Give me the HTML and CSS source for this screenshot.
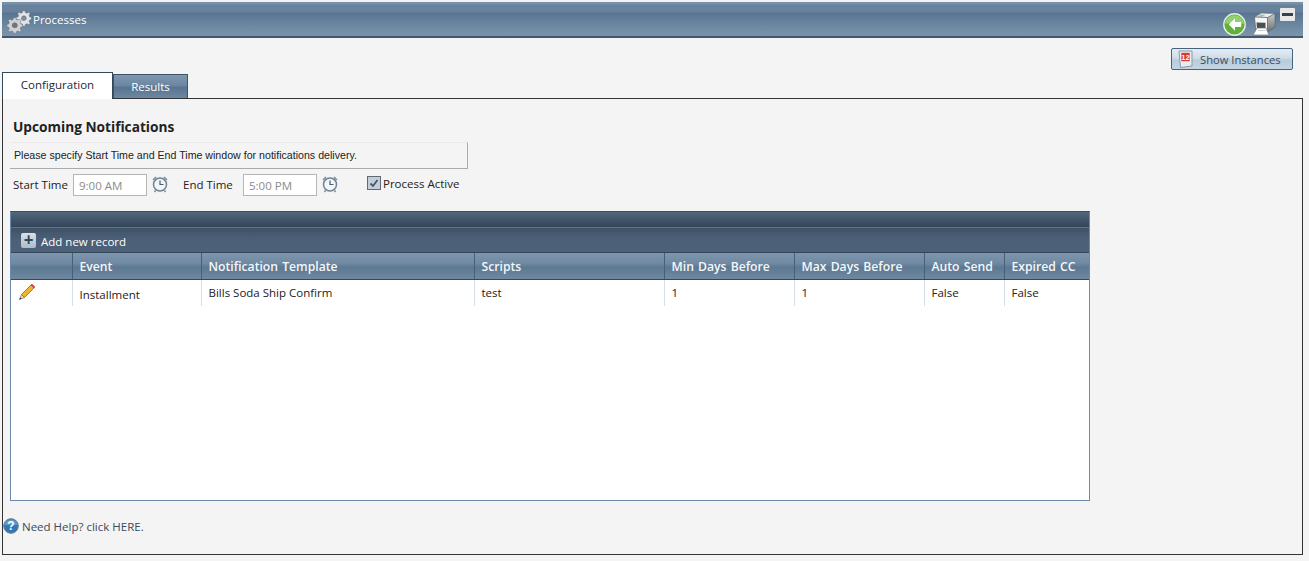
FILE: index.html
```html
<!DOCTYPE html>
<html lang="en">
<head>
<meta charset="utf-8">
<title>Processes</title>
<link rel="stylesheet" href="styles.css">
</head>
<body>
<header class="titlebar">
  <div class="title-left">
    <svg class="gears" viewBox="0 0 24 24" width="26" height="26">
      <g fill="#e2e5e8" stroke="#6a7078" stroke-width=".5">
        <path d="M15.5 1.500h2l.4 1.800 1.500.6 1.500-1 1.400 1.400-1 1.500.6 1.500 1.600.4v2l-1.600.4-.6 1.500 1 1.500-1.400 1.400-1.500-1-1.500.6-.4 1.800h-2l-.4-1.800-1.500-.6-1.500 1-1.400-1.400 1-1.500-.6-1.500-1.800-.4v-2l1.800-.4.6-1.500-1-1.500 1.400-1.400 1.500 1 1.500-.6z"/>
        <circle cx="16.500" cy="8.500" r="2.200" fill="#7d8fa2"/>
        <path d="M7 8h2.200l.4 1.700 1.500.6 1.500-1 1.500 1.500-1 1.500.6 1.500 1.700.4v2.200l-1.700.4-.6 1.500 1 1.500-1.500 1.500-1.500-1-1.500.6-.4 1.700H7l-.4-1.700-1.500-.6-1.500 1-1.500-1.500 1-1.500-.6-1.500-1.700-.4v-2.200l1.700-.4.6-1.500-1-1.500 1.500-1.500 1.500 1 1.500-.6z" fill="#ced2d6"/>
        <circle cx="8.100" cy="15" r="2.400" fill="#6e7780"/>
      </g>
    </svg>
    <span class="title-text">Processes</span>
  </div>
  <div class="title-icons">
    <svg class="back" viewBox="0 0 24 24" width="23" height="23">
      <circle cx="12" cy="12" r="11.200" fill="#5fb13a" stroke="#e6efe2" stroke-width="1.400"/>
      <path d="M1.800 11a10.300 10 0 0 1 20.400 0z" fill="#93d070"/>
      <path d="M12.500 5.500 6 12l6.500 6.500v-4H19v-5h-6.500z" fill="#fff"/>
    </svg>
    <svg class="printer" viewBox="0 0 24 24" width="24" height="24">
      <defs>
        <linearGradient id="printer-side" x1="0" y1="0" x2="0" y2="1">
          <stop offset="0" stop-color="#c8cbcd"/>
          <stop offset="1" stop-color="#6b6f72"/>
        </linearGradient>
      </defs>
      <path d="M15.500 5.500 23 1.500V15l-7.500 5z" fill="url(#printer-side)" stroke="#55595c" stroke-width=".6"/>
      <path d="M2.500 5 9.500 1 23 1.500l-7.500 4z" fill="#eceeee" stroke="#6a6e71" stroke-width=".6"/>
      <path d="M5.500 4.500 9 2.500l4.500.2-3.500 2z" fill="#9cc5ad"/>
      <path d="M2.500 5l13 .5V20H4z" fill="#f6f6f6" stroke="#5f6366" stroke-width=".7"/>
      <path d="M4.500 10.500l9 .2V17h-8.500z" fill="#4c4f52"/>
      <path d="M5 16h9l3 7H1z" fill="#fff" stroke="#6f7275" stroke-width=".7"/>
      <path d="M5.500 18.500h8" stroke="#c5c8ca" stroke-width=".8"/>
    </svg>
    <span class="minimize"><span class="minimize-bar"></span></span>
  </div>
</header>

<div class="toolbar">
  <button class="instances" type="button">
    <svg viewBox="0 0 16 18" width="16" height="18">
      <path d="M1 1h13v15l-11.500 1.500z" fill="#e6ebf0" stroke="#8c98a4"/>
      <rect x="3" y="2.500" width="9" height="9" fill="#d8382c" stroke="#f3f3f3" stroke-width=".6"/>
      <text x="7.500" y="10" class="cal-num">12</text>
    </svg>
    <span>Show Instances</span>
  </button>
</div>

<nav class="tabs">
  <div class="tab tab-active">Configuration</div>
  <div class="tab tab-plain">Results</div>
</nav>

<main class="panel">
  <h1 class="heading">Upcoming Notifications</h1>
  <p class="notice">Please specify Start Time and End Time window for notifications delivery.</p>
  <div class="timeform">
    <label class="field-label">Start Time</label>
    <span class="time-input">9:00 AM</span>
    <svg class="clock" viewBox="0 0 18 18" width="18" height="18">
      <path d="M2 5 5 2M16 5l-3-3M4.500 15.500 3.500 17M13.500 15.500l1 1.500" stroke="#7e8f9e" stroke-width="1.600" fill="none"/>
      <circle cx="9" cy="9.500" r="6.500" fill="#f3f6f8" stroke="#6f8394" stroke-width="1.500"/>
      <path d="M9 5.500v4h3.500" stroke="#4b5c6b" stroke-width="1.200" fill="none"/>
    </svg>
    <label class="field-label label-end">End Time</label>
    <span class="time-input">5:00 PM</span>
    <svg class="clock" viewBox="0 0 18 18" width="18" height="18">
      <path d="M2 5 5 2M16 5l-3-3M4.500 15.500 3.500 17M13.500 15.500l1 1.500" stroke="#7e8f9e" stroke-width="1.600" fill="none"/>
      <circle cx="9" cy="9.500" r="6.500" fill="#f3f6f8" stroke="#6f8394" stroke-width="1.500"/>
      <path d="M9 5.500v4h3.500" stroke="#4b5c6b" stroke-width="1.200" fill="none"/>
    </svg>
    <span class="check-wrap">
      <span class="checkbox">
        <svg viewBox="0 0 12 12" width="12" height="12"><rect width="12" height="12" fill="#c5ced8"/><path d="M2.500 6.500 5 9l4.500-6" stroke="#45566a" stroke-width="1.800" fill="none"/></svg>
      </span>
      <span class="check-label">Process Active</span>
    </span>
  </div>

  <section class="grid">
    <div class="grid-top"></div>
    <div class="grid-command">
      <span class="add-icon">+</span>
      <span class="add-label">Add new record</span>
    </div>
    <table class="grid-table">
      <colgroup>
        <col class="c1"><col class="c2"><col class="c3"><col class="c4"><col class="c5"><col class="c6"><col class="c7"><col class="c8">
      </colgroup>
      <thead>
        <tr>
          <th></th><th>Event</th><th>Notification Template</th><th>Scripts</th><th>Min Days Before</th><th>Max Days Before</th><th>Auto Send</th><th>Expired CC</th>
        </tr>
      </thead>
      <tbody>
        <tr>
          <td class="edit-cell">
            <svg viewBox="0 0 18 18" width="18" height="18">
              <path d="M3.500 11.500 13 2l3 3-9.500 9.500z" fill="#eeb62e" stroke="#8a6a1e" stroke-width=".8"/>
              <path d="M13 2l1-1 3 3-1 1z" fill="#d9534a" stroke="#a33" stroke-width=".5"/>
              <path d="M3.500 11.500 1.500 16.500l5-2z" fill="#f1dcb5" stroke="#7a6a50" stroke-width=".7"/>
              <path d="M1.500 16.500l.8-2 1.200 1.200z" fill="#222"/>
            </svg>
          </td>
          <td class="event-cell">Installment</td>
          <td>Bills Soda Ship Confirm</td>
          <td>test</td>
          <td>1</td>
          <td>1</td>
          <td>False</td>
          <td>False</td>
        </tr>
      </tbody>
    </table>
  </section>

  <div class="help">
    <svg viewBox="0 0 16 16" width="16" height="16">
      <circle cx="8" cy="8" r="7.300" fill="#2f79b8" stroke="#6d7c88" stroke-width="1"/>
      <path d="M1.500 7a6.500 5.500 0 0 1 13 0z" fill="#6fa9d6" opacity=".7"/>
      <text x="8" y="12" class="help-q">?</text>
    </svg>
    <span>Need Help? click HERE.</span>
  </div>
</main>
</body>
</html>
```

FILE: styles.css
```css
* { box-sizing: border-box; }

html, body { height: 100%; }

body {
  margin: 0;
  padding: 2px 6px 0 2px;
  background: #f4f4f4;
  font-family: "Open Sans", "Noto Sans", sans-serif;
  font-size: 11.5px;
  color: #222;
  overflow: hidden;
}

.titlebar {
  height: 36px;
  display: flex;
  justify-content: space-between;
  background: linear-gradient(#7890a8 0, #7890a8 2px, #68829d 3px, #68829d 10px, #587491 11px, #6d88a1 24px, #7a93aa 33px, #7a93aa 34px);
  border-bottom: 2px solid #43586c;
}

.title-left { display: flex; align-items: flex-start; padding: 7px 0 0 4px; }

.title-text { color: #fff; margin: 3px 0 0 1px; font-size: 11.5px; }

.title-icons { display: flex; align-items: flex-start; padding-right: 8px; }

.back { margin-top: 11px; }

.printer { margin: 10px 0 0 6px; }

.minimize {
  width: 15px;
  height: 13px;
  margin: 6px 0 0 4px;
  background: #e8e8e8;
  border-radius: 1px;
  display: flex;
  align-items: center;
  justify-content: center;
}

.minimize-bar { width: 11px; height: 3px; background: #33414f; }

.toolbar { display: flex; justify-content: flex-end; padding: 10px 10px 0 0; height: 34px; }

.instances {
  width: 122px;
  height: 22px;
  padding: 0 0 0 6px;
  display: flex;
  align-items: center;
  gap: 6px;
  border: 1px solid #46627e;
  border-radius: 2px;
  background: linear-gradient(#e4ecf2, #cfdde8 45%, #b8ccdc 55%, #c4d6e3);
  font: inherit;
  font-size: 11.200px;
  color: #3c4c5c;
}

.cal-num { font-size: 7.500px; font-weight: 700; fill: #fff; text-anchor: middle; font-family: "Liberation Sans", sans-serif; }

.tabs { display: flex; align-items: flex-end; height: 26px; position: relative; z-index: 1; }

.tab { display: flex; align-items: center; justify-content: center; padding-bottom: 3px; }

.tab-active {
  width: 111px;
  height: 27px;
  margin-bottom: -1px;
  background: #fff;
  border: 1px solid #33475a;
  border-bottom: 0;
  color: #1c2a38;
}

.tab-plain {
  width: 75px;
  height: 24px;
  padding-bottom: 1px;
  background: linear-gradient(#7f97ae, #6c87a1 45%, #587491 55%, #6d88a1);
  border: 1px solid #3d5267;
  border-bottom: 0;
  color: #fff;
}

.panel {
  height: 457px;
  border: 1px solid #333;
  padding: 0 0 0 7px;
}

.heading {
  margin: 0;
  padding: 19px 0 0 3px;
  font-size: 13.700px;
  line-height: 18px;
  font-weight: 700;
  color: #222;
}

.notice {
  margin: 6px 0 0 0;
  width: 458px;
  height: 27px;
  padding: 0 0 1px 4px;
  display: flex;
  align-items: center;
  font-family: "Liberation Sans", sans-serif;
  font-size: 10.630px;
  color: #222;
  background: #f4f4f4;
  border-top: 1px solid #eaeaea;
  border-right: 1px solid #aaa;
  border-bottom: 1px solid #aaa;
}

.timeform { display: flex; align-items: flex-start; height: 42px; padding: 5px 0 0 3px; }

.field-label { line-height: 22px; width: 60px; }

.label-end { width: 60px; margin-left: 14px; }

.time-input {
  width: 74px;
  height: 22px;
  padding-left: 5px;
  background: #fff;
  border: 1px solid #b5b5b5;
  color: #8b8b8b;
  line-height: 21px;
}

.clock { margin: 1px 0 0 4px; }

.check-wrap { display: flex; align-items: center; margin-left: 28px; height: 18px; }

.checkbox {
  width: 14px;
  height: 14px;
  border: 1px solid #5d6b79;
  margin-right: 2px;
  display: flex;
}

.grid {
  width: 1080px;
  height: 290px;
  background: #fff;
  border: 1px solid #6c8aab;
  border-top-color: #3b4e62;
}

.grid-top {
  height: 16px;
  background: linear-gradient(#52677d, #3f5468 55%, #334658);
  border-bottom: 1px solid #5f738a;
}

.grid-command {
  height: 25px;
  display: flex;
  align-items: center;
  gap: 5px;
  padding: 0 0 0 10px;
  background: linear-gradient(#3f5267, #4b5f76 45%, #4d6178);
  border-bottom: 1px solid #33465a;
  color: #fff;
}

.add-label { padding-top: 3px; }

.add-icon {
  width: 15px;
  height: 15px;
  border-radius: 2px;
  background: linear-gradient(#d6e0e8, #aabccb);
  color: #33465a;
  font-size: 17px;
  font-weight: 700;
  line-height: 14px;
  text-align: center;
}

.grid-table { width: 100%; border-collapse: collapse; table-layout: fixed; }

.c1 { width: 61px; }
.c2 { width: 129px; }
.c3 { width: 273px; }
.c4 { width: 190px; }
.c5 { width: 130px; }
.c6 { width: 130px; }
.c7 { width: 80px; }

.grid-table th {
  height: 26px;
  padding: 1px 7px 0;
  text-align: left;
  font-size: 12.200px;
  font-weight: 600;
  word-spacing: 1px;
  color: #f4f7fa;
  white-space: nowrap;
  background: linear-gradient(#7d96ae, #7089a2 40%, #5c7892 55%, #7088a0);
  border-left: 1px solid #46607a;
  border-bottom: 1px solid #35495c;
}

.grid-table th:first-child { border-left: 0; }

.grid-table td {
  height: 27px;
  padding: 0 7px 1px;
  vertical-align: middle;
  border-left: 1px solid #d6dee6;
  color: #222;
}

.grid-table td:first-child { border-left: 0; }

.grid-table .event-cell { padding-top: 4px; }

.grid-table .edit-cell { padding: 0 0 2px 7px; }

.edit-cell svg { display: block; }

.help { display: flex; align-items: center; gap: 3px; margin: 17px 0 0 -7px; padding-left: 0; color: #3a4a5a; }

.help-q { font-size: 12px; font-weight: 700; fill: #fff; text-anchor: middle; font-family: "Liberation Sans", sans-serif; }
```
